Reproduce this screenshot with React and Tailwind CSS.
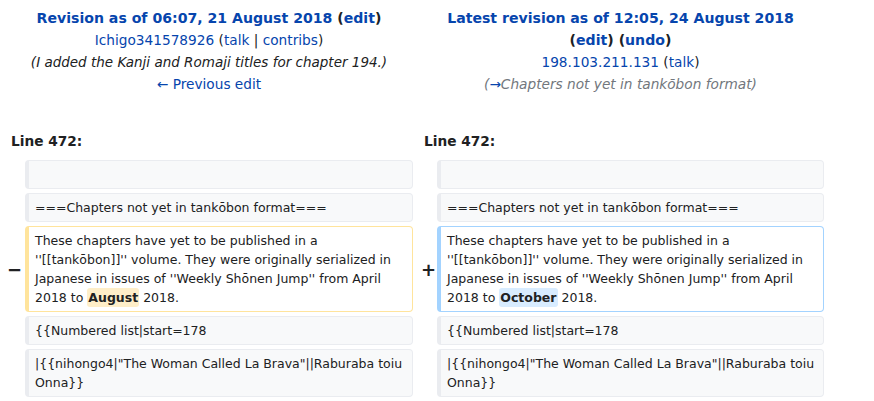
function Link({ children, className = '' }) {
  return <span className={`text-[#0645ad] ${className}`}>{children}</span>;
}

function Cell({ kind = 'context', children }) {
  const styles = {
    context: 'border-[#eaecf0] bg-[#f8f9fa]',
    deleted: 'border-[#ffe49c] bg-white',
    added: 'border-[#a3d3ff] bg-white',
  };
  return (
    <div
      className={`rounded-[4px] border border-l-4 px-[6px] py-[4px] text-[12.5px] leading-[19px] text-[#202122] break-words ${styles[kind]}`}
    >
      {children}
    </div>
  );
}

function Marker({ sign, className = '' }) {
  return (
    <div className={`flex items-center justify-end text-[18px] font-bold text-[#202122] ${className}`}>
      {sign}
    </div>
  );
}

export default function App() {
  return (
    <div
      className="h-[401px] w-[874px] overflow-hidden bg-white text-[#202122]"
      style={{ fontFamily: '"DejaVu Sans", sans-serif' }}
    >
      <div className="grid grid-cols-[16px_388px_16px_387px] gap-x-1 pl-[5px]">
        {/* Revision headers */}
        <div className="col-span-2 mt-[7px] text-center text-[13.7px] leading-[22px]">
          <div className="text-[14.1px] font-bold">
            <Link>Revision as of 06:07, 21 August 2018</Link> (<Link>edit</Link>)
          </div>
          <div>
            <Link>Ichigo341578926</Link> (<Link>talk</Link> | <Link>contribs</Link>)
          </div>
          <div className="text-[13.5px] italic text-[#202122]">
            (I added the Kanji and Romaji titles for chapter 194.)
          </div>
          <div>
            <Link>← Previous edit</Link>
          </div>
        </div>
        <div className="col-span-2 mt-[7px] text-center text-[13.7px] leading-[22px]">
          <div className="text-[14.1px] font-bold">
            <Link>Latest revision as of 12:05, 24 August 2018</Link>
          </div>
          <div className="text-[14.1px] font-bold">
            (<Link>edit</Link>) (<Link>undo</Link>)
          </div>
          <div>
            <Link>198.103.211.131</Link> (<Link>talk</Link>)
          </div>
          <div className="italic text-[#72777d]">
            (<Link>→</Link>Chapters not yet in tankōbon format)
          </div>
        </div>

        {/* Line numbers */}
        <div className="col-span-2 mt-[35px] pl-[6px] text-[13.7px] font-bold leading-[22px]">Line 472:</div>
        <div className="col-span-2 mt-[35px] pl-[7px] text-[13.7px] font-bold leading-[22px]">Line 472:</div>
      </div>

      <div className="mt-[8px] grid grid-cols-[16px_388px_16px_387px] gap-x-1 gap-y-1 pl-[5px]">
        <div />
        <Cell>&nbsp;</Cell>
        <div />
        <Cell>&nbsp;</Cell>

        <div />
        <Cell>===Chapters not yet in tankōbon format===</Cell>
        <div />
        <Cell>===Chapters not yet in tankōbon format===</Cell>

        <Marker sign="−" className="-mr-[1px]" />
        <Cell kind="deleted">
          These chapters have yet to be published in a ''[[tankōbon]]'' volume. They were originally serialized in
          Japanese in issues of ''Weekly Shōnen Jump'' from April 2018 to{' '}
          <span className="rounded-[3px] bg-[#feeec8] px-px py-[2px] font-bold">August</span> 2018.
        </Cell>
        <Marker sign="+" className="-mr-[3px]" />
        <Cell kind="added">
          These chapters have yet to be published in a ''[[tankōbon]]'' volume. They were originally serialized in
          Japanese in issues of ''Weekly Shōnen Jump'' from April 2018 to{' '}
          <span className="rounded-[3px] bg-[#d8ecff] px-px py-[2px] font-bold">October</span> 2018.
        </Cell>

        <div />
        <Cell>{'{{Numbered list|start=178'}</Cell>
        <div />
        <Cell>{'{{Numbered list|start=178'}</Cell>

        <div />
        <Cell>{'|{{nihongo4|"The Woman Called La Brava"||Raburaba toiu Onna}}'}</Cell>
        <div />
        <Cell>{'|{{nihongo4|"The Woman Called La Brava"||Raburaba toiu Onna}}'}</Cell>
      </div>
    </div>
  );
}
